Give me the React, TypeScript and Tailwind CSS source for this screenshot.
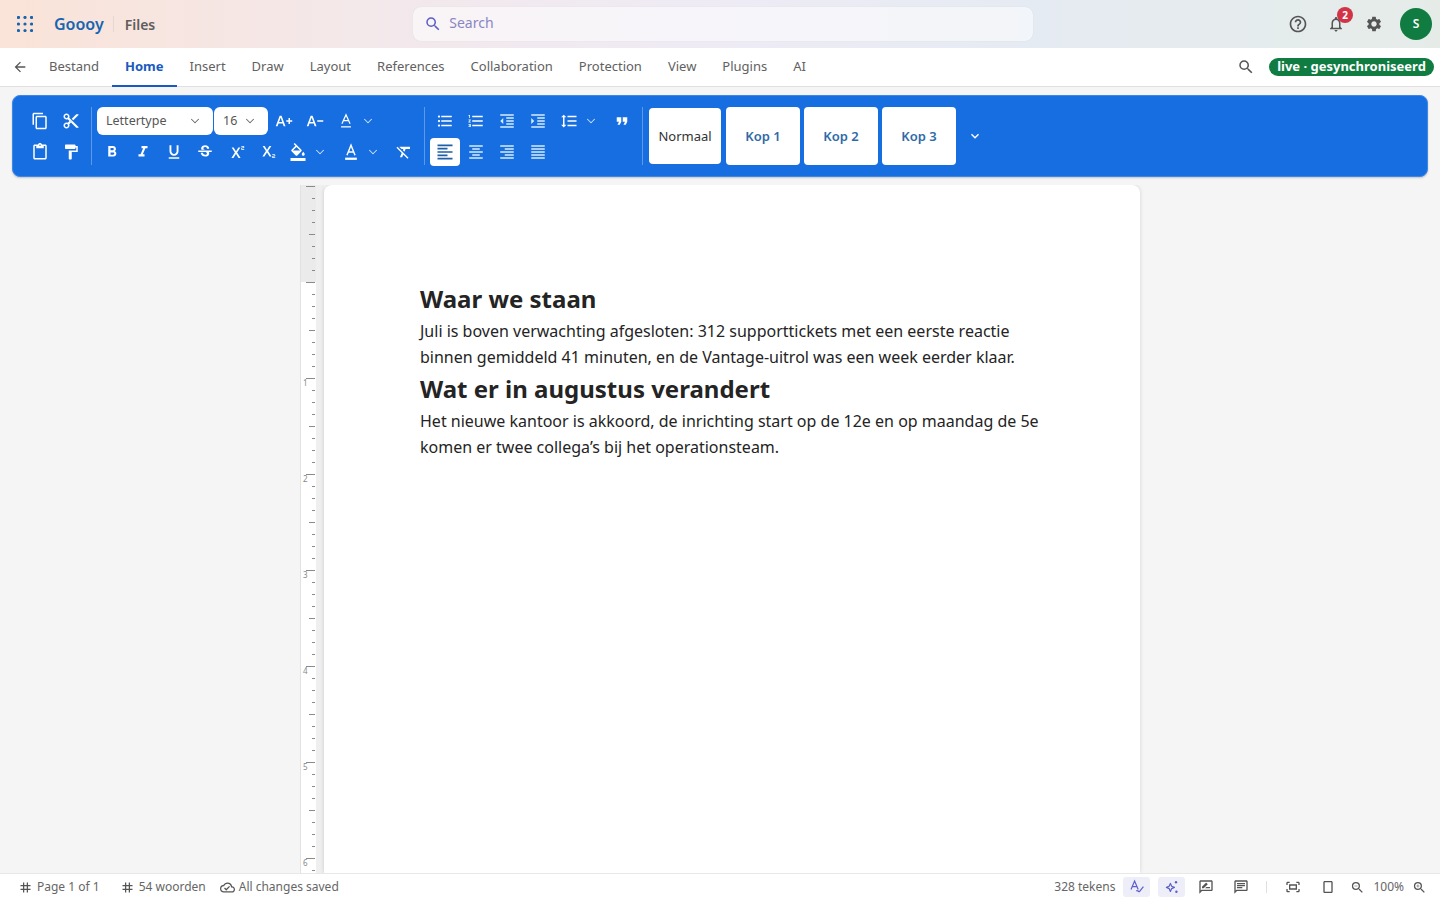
import type { ComponentType, ReactNode } from "react";
import { ChevronDown } from "lucide-react";
import {
  MdArrowBack,
  MdCropPortrait,
  MdExpandMore,
  MdFormatAlignCenter,
  MdFormatAlignJustify,
  MdFormatAlignLeft,
  MdFormatAlignRight,
  MdFormatBold,
  MdFormatClear,
  MdFormatColorFill,
  MdFormatIndentDecrease,
  MdFormatIndentIncrease,
  MdFormatItalic,
  MdFormatLineSpacing,
  MdFormatListBulleted,
  MdFormatListNumbered,
  MdFormatPaint,
  MdFormatQuote,
  MdFormatUnderlined,
  MdHelpOutline,
  MdNotificationsNone,
  MdOutlineChat,
  MdOutlineCloudDone,
  MdOutlineContentCopy,
  MdOutlineContentCut,
  MdOutlineContentPaste,
  MdOutlineFitScreen,
  MdOutlineRateReview,
  MdSearch,
  MdSettings,
  MdStrikethroughS,
  MdSubscript,
  MdSuperscript,
  MdTag,
  MdTextDecrease,
  MdTextIncrease,
  MdZoomIn,
  MdZoomOut,
} from "react-icons/md";

type Icon = ComponentType<{ className?: string }>;

const tabs = ["Bestand", "Home", "Insert", "Draw", "Layout", "References", "Collaboration", "Protection", "View", "Plugins", "AI"];

function GridDots() {
  return (
    <svg width="16" height="16" viewBox="0 0 16 16" className="fill-[#1565b0]">
      {[1.5, 8, 14.5].map((y) =>
        [1.5, 8, 14.5].map((x) => <circle key={`${x}-${y}`} cx={x} cy={y} r="1.6" />),
      )}
    </svg>
  );
}

function TopBar() {
  return (
    <header className="flex h-12 shrink-0 items-center bg-[linear-gradient(90deg,#fae3d8_0%,#f3e8ea_25%,#eeebf5_50%,#e5ebf2_72%,#e5ece8_100%)] pl-[17px] pr-2">
      <GridDots />
      <span className="ml-[21px] text-[16px] font-semibold text-[#1565b0]">Goooy</span>
      <span className="ml-[9px] h-4 w-px bg-[#e3d8d2]" />
      <span className="ml-[11px] text-[14px] font-semibold text-[#605e5c]">Files</span>
      <div className="ml-[258px] flex h-[34px] w-[620px] items-center rounded-lg bg-white/50 pl-[11px] shadow-[0_0_1px_rgba(0,0,0,0.12)]">
        <MdSearch className="h-[18px] w-[18px] text-[#5b5fc7]" />
        <span className="ml-[7px] pb-1 text-[14px] text-[#8a86c4]">Search</span>
      </div>
      <div className="ml-auto flex items-center">
        <MdHelpOutline className="h-[20px] w-[20px] text-[#555]" />
        <div className="relative ml-[19px]">
          <MdNotificationsNone className="h-[18px] w-[18px] text-[#555]" />
          <span className="absolute -right-[8px] -top-[8px] flex h-4 w-4 items-center justify-center rounded-full bg-[#d13447] text-[10px] font-bold text-white">
            2
          </span>
        </div>
        <MdSettings className="ml-[20px] h-[18px] w-[18px] text-[#555]" />
        <span className="ml-[17px] flex h-8 w-8 items-center justify-center rounded-full bg-[#107c41] text-[12px] font-semibold text-white">
          S
        </span>
      </div>
    </header>
  );
}

function TabBar() {
  return (
    <nav className="flex h-[39px] shrink-0 items-stretch border-b border-[#e0e0e0] bg-white pl-3 pr-[6px]">
      <div className="flex w-[24px] items-center">
        <MdArrowBack className="h-4 w-4 text-[#555]" />
      </div>
      {tabs.map((t) =>
        t === "Home" ? (
          <span key={t} className="-mb-px flex w-[64.5px] items-center justify-center border-b-2 border-[#185abd] text-[13px] font-bold text-[#185abd]">
            {t}
          </span>
        ) : (
          <span key={t} className="flex items-center px-[13px] text-[13px] text-[#616161]">
            {t}
          </span>
        ),
      )}
      <div className="ml-auto flex items-center">
        <MdSearch className="h-[18px] w-[18px] text-[#555]" />
        <span className="ml-[14px] flex h-[18px] w-[165px] items-center justify-center rounded-full bg-[#107c41] text-[13px] font-bold text-white">
          live · gesynchroniseerd
        </span>
      </div>
    </nav>
  );
}

function Btn({ icon: I, className = "text-white" }: { icon: Icon; className?: string }) {
  return (
    <span className="flex h-[30px] w-[31px] items-center justify-center">
      <I className={`h-[18px] w-[18px] ${className}`} />
    </span>
  );
}

function Chevron({ className = "" }: { className?: string }) {
  return (
    <span className={`flex h-[30px] items-center justify-center ${className}`}>
      <ChevronDown className="h-[14px] w-[14px] text-[#cfe4ff]" strokeWidth={1.75} />
    </span>
  );
}

function Select({ label, width }: { label: string; width: string }) {
  return (
    <span className={`flex h-[28px] items-center justify-between rounded-md bg-white pl-[9px] pr-[11px] text-[12.5px] text-[#555] ${width}`}>
      <span className="pt-px">{label}</span>
      <ChevronDown className="h-[14px] w-[14px] text-[#666]" strokeWidth={1.75} />
    </span>
  );
}

function StyleCard({ label, width, dark }: { label: string; width: string; dark?: boolean }) {
  return (
    <span
      className={
        dark
          ? `flex h-[56px] items-center justify-center rounded-sm bg-white pt-px text-[13px] text-[#333] ${width}`
          : `flex h-[58px] items-center justify-center rounded-[4px] bg-white pt-px text-[13px] font-semibold text-[#2f6aa8] ${width}`
      }
    >
      {label}
    </span>
  );
}

function UnderlinedA({ className }: { className?: string }) {
  return (
    <svg viewBox="0 0 20 20" className={className} fill="none" stroke="currentColor" strokeWidth="1.4">
      <path d="M5.5 13 10 3l4.500 10M7 9.700h6" />
      <path d="M4.500 16.500h11" />
    </svg>
  );
}

function TextColorA({ className }: { className?: string }) {
  return (
    <svg viewBox="0 0 20 20" className={className} fill="none" stroke="currentColor" strokeWidth="1.600">
      <path d="M5.500 13.500 10 2.500l4.500 11M7 10h6" />
      <path d="M3.500 17.500h13" strokeWidth="2.500" />
    </svg>
  );
}

function Toolbar() {
  const soft = "text-[#d6ebff]";
  return (
    <div className="shrink-0 bg-[#f5f5f5] px-3 pb-2 pt-2">
      <div className="flex h-[82px] items-center rounded-lg border border-[#3f87e6] bg-[#176ee0] pl-[11px] shadow-[0_1px_2px_rgba(0,0,0,0.2)]">
        <div className="grid grid-cols-[31px_31px] gap-y-px">
          <Btn icon={MdOutlineContentCopy} />
          <Btn icon={MdOutlineContentCut} />
          <Btn icon={MdOutlineContentPaste} />
          <Btn icon={MdFormatPaint} />
        </div>
        <span className="mx-[5px] h-[58px] w-px bg-white/30" />
        <div className="flex flex-col gap-px">
          <div className="flex h-[30px] items-center">
            <Select label="Lettertype" width="w-[116px]" />
            <span className="ml-px">
              <Select label="16" width="w-[54px]" />
            </span>
            <Btn icon={MdTextIncrease} />
            <Btn icon={MdTextDecrease} />
            <Btn icon={UnderlinedA} />
            <Chevron className="w-[14px]" />
          </div>
          <div className="-ml-px flex h-[30px] items-center">
            <Btn icon={MdFormatBold} />
            <Btn icon={MdFormatItalic} />
            <Btn icon={MdFormatUnderlined} />
            <Btn icon={MdStrikethroughS} />
            <Btn icon={MdSuperscript} />
            <Btn icon={MdSubscript} />
            <Btn icon={MdFormatColorFill} />
            <Chevron className="mr-2 w-[14px]" />
            <Btn icon={TextColorA} />
            <Chevron className="mr-2 w-[14px]" />
            <Btn icon={MdFormatClear} />
          </div>
        </div>
        <span className="mx-[5px] h-[58px] w-px bg-white/30" />
        <div className="flex flex-col gap-px">
          <div className="-ml-px flex h-[30px] items-center">
            <Btn icon={MdFormatListBulleted} />
            <Btn icon={MdFormatListNumbered} />
            <Btn icon={MdFormatIndentDecrease} className={soft} />
            <Btn icon={MdFormatIndentIncrease} className={soft} />
            <Btn icon={MdFormatLineSpacing} />
            <Chevron className="mr-2 w-[14px]" />
            <Btn icon={MdFormatQuote} />
          </div>
          <div className="flex h-[30px] items-center">
            <span className="flex h-[28px] w-[30px] items-center justify-center rounded-[4px] bg-white">
              <MdFormatAlignLeft className="h-[20px] w-[20px] text-[#1f5fa8]" />
            </span>
            <Btn icon={MdFormatAlignCenter} className={soft} />
            <Btn icon={MdFormatAlignRight} className={soft} />
            <Btn icon={MdFormatAlignJustify} className={soft} />
          </div>
        </div>
        <span className="ml-[5px] mr-[6px] h-[58px] w-px bg-white/30" />
        <div className="flex items-center gap-[5px]">
          <StyleCard label="Normaal" width="w-[72px]" dark />
          <StyleCard label="Kop 1" width="w-[74px]" />
          <span className="-ml-px">
            <StyleCard label="Kop 2" width="w-[74px]" />
          </span>
          <span className="-ml-px">
            <StyleCard label="Kop 3" width="w-[74px]" />
          </span>
        </div>
        <span className="ml-[11px] flex w-[16px] justify-center">
          <MdExpandMore className="h-4 w-4 text-white" />
        </span>
      </div>
    </div>
  );
}

function Ruler() {
  const ticks: ReactNode[] = [];
  for (let i = 0; i < 58; i++) {
    const inch = i >= 8 && i % 8 === 0 ? i / 8 - 1 : 0;
    const len = i % 8 === 0 ? "w-[9px]" : i % 4 === 0 ? "w-[6px]" : "w-[3px]";
    ticks.push(
      <div key={i} className="relative flex h-3 shrink-0 justify-end">
        <span className={`h-px bg-[#8a8a8a] ${len}`} />
        {inch > 0 && (
          <span className="absolute left-[2px] top-0 text-[8px] leading-[10px] text-[#888]">{inch}</span>
        )}
      </div>,
    );
  }
  return (
    <div className="relative flex w-[16px] shrink-0 flex-col overflow-hidden border-l border-[#e2e2e2] bg-[linear-gradient(#ebebeb_97px,#ffffff_97px)] pr-px pt-px">
      {ticks}
    </div>
  );
}

function Page() {
  return (
    <article className="w-[816px] shrink-0 rounded-t-lg bg-white px-24 pt-[97px] text-[#242424] shadow-[0_0_4px_rgba(0,0,0,0.14)]">
      <h1 className="mb-[2px] text-[24px] font-bold leading-[34px]">Waar we staan</h1>
      <p className="mb-[2px] text-[16px] leading-[26px]">
        Juli is boven verwachting afgesloten: 312 supporttickets met een eerste reactie binnen gemiddeld 41 minuten, en de Vantage-uitrol was een week eerder klaar.
      </p>
      <h2 className="mb-[2px] text-[24px] font-bold leading-[34px]">Wat er in augustus verandert</h2>
      <p className="text-[16px] leading-[26px]">
        Het nieuwe kantoor is akkoord, de inrichting start op de 12e en op maandag de 5e komen er twee collega’s bij het operationsteam.
      </p>
    </article>
  );
}

function Proofing() {
  return (
    <svg viewBox="0 0 20 20" className="h-4 w-4" fill="none" stroke="#5b5fc7" strokeWidth="1.500">
      <path d="M2.500 13 7 2.500 11.500 13M4 9.500h6" />
      <path d="M9 15c1-.800 1.500-.800 2.300 0s1.400 1.200 2 .500L18 9.500" />
    </svg>
  );
}

function Sparkles() {
  return (
    <svg viewBox="0 0 20 20" className="h-4 w-4" fill="none" stroke="#5b5fc7" strokeWidth="1.500">
      <path d="M8 5.500 9.600 9 13 10.500 9.600 12 8 15.500 6.400 12 3 10.500 6.400 9z" strokeLinejoin="round" />
      <circle cx="15" cy="4" r="1.500" fill="#5b5fc7" stroke="none" />
      <circle cx="15.500" cy="16" r="1.500" fill="#5b5fc7" stroke="none" />
    </svg>
  );
}

function StatusBar() {
  return (
    <footer className="flex h-[27px] shrink-0 items-center border-t border-[#e8e8e8] bg-white pl-[18px] text-[12px] text-[#666]">
      <MdTag className="h-[15px] w-[15px] text-[#555]" />
      <span className="ml-[4px]">Page 1 of 1</span>
      <MdTag className="ml-5 h-[15px] w-[15px] text-[#555]" />
      <span className="ml-[4px]">54 woorden</span>
      <MdOutlineCloudDone className="ml-[14px] h-[15px] w-[15px] text-[#555]" />
      <span className="ml-[4px]">All changes saved</span>
      <div className="ml-auto flex items-center pr-[13px]">
        <span>328 tekens</span>
        <span className="ml-2 flex h-5 w-[27px] items-center justify-center rounded-[3px] bg-[#eeeef9]">
          <Proofing />
        </span>
        <span className="ml-2 flex h-5 w-[27px] items-center justify-center rounded-[3px] bg-[#eeeef9]">
          <Sparkles />
        </span>
        <MdOutlineRateReview className="ml-[13px] h-4 w-4 text-[#555]" />
        <MdOutlineChat className="ml-[19px] h-4 w-4 text-[#555]" />
        <span className="ml-[17px] h-3 w-px bg-[#e0e0e0]" />
        <MdOutlineFitScreen className="ml-[18px] h-4 w-4 text-[#555]" />
        <MdCropPortrait className="ml-[19px] h-4 w-4 text-[#555]" />
        <MdZoomOut className="ml-[14px] h-[15px] w-[15px] text-[#555]" />
        <span className="ml-[8px]">100%</span>
        <MdZoomIn className="ml-[8px] h-[15px] w-[15px] text-[#555]" />
      </div>
    </footer>
  );
}

export default function App() {
  return (
    <div className="flex h-screen w-full flex-col overflow-hidden bg-[#f5f5f5] font-['Noto_Sans',sans-serif]">
      <TopBar />
      <TabBar />
      <Toolbar />
      <main className="flex min-h-0 flex-1 overflow-hidden pl-[300px]">
        <Ruler />
        <div className="w-2 shrink-0 bg-[#efefef]" />
        <Page />
      </main>
      <StatusBar />
    </div>
  );
}
